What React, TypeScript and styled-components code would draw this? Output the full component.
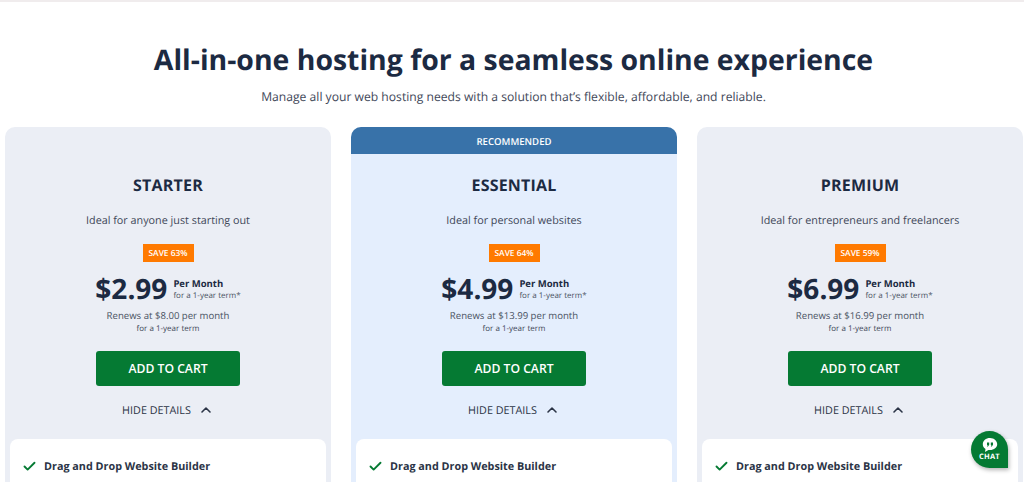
import { createGlobalStyle } from 'styled-components';
import styled from 'styled-components';
import { ChevronUp, Check } from 'lucide-react';

const GlobalStyle = createGlobalStyle`
  html, body {
    margin: 0;
    padding: 0;
    height: 482px;
    overflow: hidden;
    background: #fff;
    font-family: "Open Sans", "Liberation Sans", sans-serif;
    color: #1c2a42;
    text-rendering: geometricPrecision;
  }
`;

const Page = styled.div`
  height: 482px;
  overflow: hidden;
  border-top: 2px solid #f0eced;
  box-sizing: border-box;
`;

const Header = styled.header`
  text-align: center;
  padding: 40px 0 0 3px;
`;

const Title = styled.h1`
  margin: 0;
  font-size: 28.4px;
  line-height: 36px;
  font-weight: 700;
  color: #1c2a42;
`;

const Subtitle = styled.p`
  margin: 9px 0 0;
  font-size: 12.15px;
  line-height: 20px;
  color: #3f4859;
`;

const Plans = styled.div`
  display: grid;
  grid-template-columns: repeat(3, 326px);
  gap: 20px;
  padding-left: 5px;
  margin-top: 20px;
`;

const Card = styled.section<{ $featured?: boolean }>`
  height: 400px;
  border-radius: 10px 10px 0 0;
  background: ${p => (p.$featured ? '#e4eefd' : '#ebeef5')};
  overflow: hidden;
  padding: ${p => (p.$featured ? '0 5px' : '27px 5px 0')};
  box-sizing: border-box;
`;

const Banner = styled.div`
  height: 27px;
  margin: 0 -5px;
  background: #3872a9;
  color: #fff;
  font-size: 9.6px;
  font-weight: 600;
  line-height: 29px;
  text-align: center;
`;

const Body = styled.div`
  display: flex;
  flex-direction: column;
  align-items: center;
`;

const PlanName = styled.h2`
  margin: 20px 0 0;
  font-size: 16px;
  line-height: 22px;
  font-weight: 700;
  letter-spacing: 0.2px;
  color: #1c2a42;
`;

const Ideal = styled.p`
  margin: 17px 0 0;
  font-size: 10.8px;
  line-height: 16px;
  color: #3f4859;
`;

const Save = styled.span`
  margin-top: 15px;
  width: 51px;
  height: 18px;
  background: #ff7a00;
  color: #fff;
  font-size: 8.4px;
  font-weight: 600;
  line-height: 20px;
  text-align: center;
`;

const PriceRow = styled.div`
  margin-top: 8px;
  display: flex;
  align-items: center;
  gap: 6px;
`;

const Price = styled.span`
  font-size: 28px;
  line-height: 38px;
  font-weight: 700;
  color: #1c2a42;
`;

const Term = styled.div`
  display: flex;
  flex-direction: column;
`;

const PerMonth = styled.span`
  font-size: 9.5px;
  line-height: 13px;
  font-weight: 700;
  color: #1c2a42;
`;

const TermNote = styled.span`
  font-size: 8px;
  line-height: 12px;
  color: #4a5363;
`;

const Renews = styled.p`
  margin: 1px 0 0;
  font-size: 9.6px;
  line-height: 14px;
  color: #4a5363;
`;

const RenewsTerm = styled.p`
  margin: 0;
  font-size: 8px;
  line-height: 12px;
  color: #3f4859;
`;

const CartButton = styled.button`
  margin-top: 16px;
  width: 144px;
  height: 35px;
  border: 0;
  border-radius: 3px;
  background: #057a33;
  color: #fff;
  font-family: inherit;
  font-size: 12.2px;
  font-weight: 600;
`;

const DetailsToggle = styled.div`
  margin-top: 16px;
  display: flex;
  align-items: center;
  gap: 7px;
  font-size: 10.8px;
  line-height: 15px;
  font-weight: 500;
  color: #2b3446;
`;

const Features = styled.div`
  margin-top: 21px;
  height: 60px;
  background: #fff;
  border-radius: 8px 8px 0 0;
  padding: 20px 12px 0;
  box-sizing: border-box;
  display: flex;
  align-items: flex-start;
  gap: 7px;
`;

const FeatureLabel = styled.span`
  font-size: 10.8px;
  line-height: 15px;
  font-weight: 700;
  color: #2b3446;
`;

const ChatBubble = styled.div`
  position: absolute;
  left: 971px;
  top: 431px;
  width: 37px;
  height: 37px;
  border-radius: 50% 50% 0 50%;
  background: #057a33;
  box-shadow: 1px 2px 4px rgba(0, 0, 0, 0.3);
  color: #fff;
  display: flex;
  flex-direction: column;
  align-items: center;
  padding-top: 6px;
  box-sizing: border-box;
`;

const ChatLabel = styled.span`
  font-size: 7.5px;
  line-height: 9px;
  font-weight: 700;
  letter-spacing: 0.2px;
`;

const plans = [
  { name: 'STARTER', ideal: 'Ideal for anyone just starting out', save: 'SAVE 63%', price: '$2.99', renews: 'Renews at $8.00 per month' },
  { name: 'ESSENTIAL', ideal: 'Ideal for personal websites', save: 'SAVE 64%', price: '$4.99', renews: 'Renews at $13.99 per month', featured: true },
  { name: 'PREMIUM', ideal: 'Ideal for entrepreneurs and freelancers', save: 'SAVE 59%', price: '$6.99', renews: 'Renews at $16.99 per month' },
];

export default function App() {
  return (
    <Page>
      <GlobalStyle />
      <Header>
        <Title>All-in-one hosting for a seamless online experience</Title>
        <Subtitle>Manage all your web hosting needs with a solution that’s flexible, affordable, and reliable.</Subtitle>
      </Header>
      <Plans>
        {plans.map(plan => (
          <Card key={plan.name} $featured={plan.featured}>
            {plan.featured && <Banner>RECOMMENDED</Banner>}
            <Body>
              <PlanName>{plan.name}</PlanName>
              <Ideal>{plan.ideal}</Ideal>
              <Save>{plan.save}</Save>
              <PriceRow>
                <Price>{plan.price}</Price>
                <Term>
                  <PerMonth>Per Month</PerMonth>
                  <TermNote>for a 1-year term*</TermNote>
                </Term>
              </PriceRow>
              <Renews>{plan.renews}</Renews>
              <RenewsTerm>for a 1-year term</RenewsTerm>
              <CartButton>ADD TO CART</CartButton>
              <DetailsToggle>
                HIDE DETAILS
                <ChevronUp size={16} strokeWidth={2.4} />
              </DetailsToggle>
            </Body>
            <Features>
              <Check size={15} strokeWidth={3} color="#057a33" />
              <FeatureLabel>Drag and Drop Website Builder</FeatureLabel>
            </Features>
          </Card>
        ))}
      </Plans>
      <ChatBubble>
        <svg width="16" height="16" viewBox="0 0 16 15">
          <path d="M8 0.5C3.9 0.5 0.8 3.2 0.8 6.7c0 2 1 3.7 2.7 4.8L3 14.5l3.4-2.1c.5.1 1.1.1 1.6.1 4.1 0 7.2-2.6 7.2-5.8S12.1.5 8 .5z" fill="#fff" />
          <path d="M5 5h2.2v2.3L6 9H5l.7-1.6H5zM8.8 5H11v2.3L9.8 9h-1l.7-1.6h-.7z" fill="#057a33" />
        </svg>
        <ChatLabel>CHAT</ChatLabel>
      </ChatBubble>
    </Page>
  );
}
